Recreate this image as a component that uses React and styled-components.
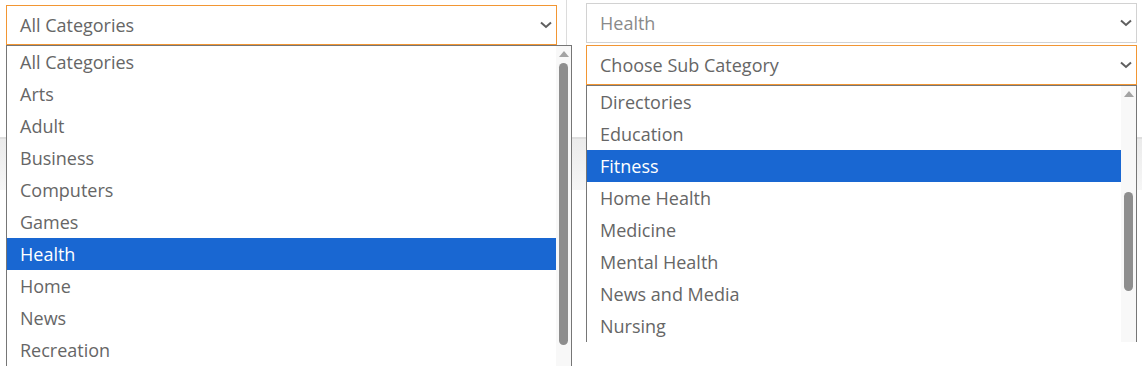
import React from 'react';
import styled, { createGlobalStyle } from 'styled-components';

const GlobalStyle = createGlobalStyle`
  * { box-sizing: border-box; }
  body {
    margin: 0;
    background: #fff;
    font-family: "Open Sans", "Noto Sans", sans-serif;
  }
`;

const categories = [
  'All Categories', 'Arts', 'Adult', 'Business', 'Computers', 'Games',
  'Health', 'Home', 'News', 'Recreation',
];

const subCategories = [
  'Directories', 'Education', 'Fitness', 'Home Health', 'Medicine',
  'Mental Health', 'News and Media', 'Nursing',
];

const Page = styled.div`
  width: 1142px;
  height: 369px;
  overflow: hidden;
  display: grid;
  grid-template-columns: 567px 1fr;
  grid-template-rows: 137px 53px 1fr;
`;

const LeftCell = styled.div`
  grid-column: 1;
  grid-row: 1;
  padding: 5px 0 0 6px;
  border-right: 1px solid #dcdcdc;
  position: relative;
  z-index: 2;
`;

const RightCell = styled.div`
  grid-column: 2;
  grid-row: 1;
  padding: 3px 0 0 19px;
  display: flex;
  flex-direction: column;
  gap: 2px;
  position: relative;
  z-index: 2;
`;

const Band = styled.div`
  grid-column: 1 / -1;
  grid-row: 2;
  border-top: 2px solid #dedede;
  background: linear-gradient(#ebebeb, #f6f6f6);
`;

const Field = styled.div`
  position: relative;
  width: 551px;
`;

const SelectBox = styled.div`
  height: 40px;
  border: 1px solid ${p => (p.$focused ? '#f29633' : '#d2d2d2')};
  display: flex;
  align-items: center;
  justify-content: space-between;
  padding: 0 4px 0 13px;
  font-size: 18px;
  color: ${p => (p.$muted ? '#8a8a8a' : '#666')};
  background: #fff;
`;

const Chevron = () => (
  <svg width="12" height="8" viewBox="0 0 12 8">
    <path d="M1 1.5 L6 6 L11 1.5" fill="none" stroke="#5f5f5f" strokeWidth="2" />
  </svg>
);

const Listbox = styled.div`
  position: absolute;
  top: 100%;
  left: 0;
  width: ${p => p.$width}px;
  border: 1px solid #767676;
  border-bottom: none;
  background: #fff;
  display: flex;
  z-index: 10;
`;

const Options = styled.div`
  flex: 1;
  overflow: hidden;
`;

const Option = styled.div`
  height: 32px;
  line-height: 32px;
  padding-left: 13px;
  font-size: 18px;
  white-space: nowrap;
  color: ${p => (p.$selected ? '#fff' : '#666')};
  background: ${p => (p.$selected ? '#1967d2' : 'transparent')};
`;

const Scrollbar = styled.div`
  width: 15px;
  background: #f8f8f8;
  display: flex;
  flex-direction: column;
  align-items: center;
`;

const ScrollArrow = styled.div`
  margin-top: 5px;
  width: 0;
  height: 0;
  border-left: 5px solid transparent;
  border-right: 5px solid transparent;
  border-bottom: 6px solid #a3a3a3;
`;

const ScrollThumb = styled.div`
  margin-top: ${p => p.$offset}px;
  width: 9px;
  height: ${p => p.$size}px;
  border-radius: 5px;
  background: #8e8e8e;
`;

const Dropdown = ({ items, selected, width, thumbOffset, thumbSize }) => (
  <Listbox $width={width}>
    <Options>
      {items.map(item => (
        <Option key={item} $selected={item === selected}>{item}</Option>
      ))}
    </Options>
    <Scrollbar>
      <ScrollArrow />
      <ScrollThumb $offset={thumbOffset} $size={thumbSize} />
    </Scrollbar>
  </Listbox>
);

export default function App() {
  return (
    <>
      <GlobalStyle />
      <Page>
        <LeftCell>
          <Field>
            <SelectBox $focused>
              All Categories
              <Chevron />
            </SelectBox>
            <Dropdown
              items={categories}
              selected="Health"
              width={566}
              thumbOffset={6}
              thumbSize={282}
            />
          </Field>
        </LeftCell>

        <RightCell>
          <Field>
            <SelectBox $muted>
              Health
              <Chevron />
            </SelectBox>
          </Field>
          <Field>
            <SelectBox $focused>
              Choose Sub Category
              <Chevron />
            </SelectBox>
            <Dropdown
              items={subCategories}
              selected="Fitness"
              width={551}
              thumbOffset={95}
              thumbSize={99}
            />
          </Field>
        </RightCell>

        <Band />
      </Page>
    </>
  );
}
